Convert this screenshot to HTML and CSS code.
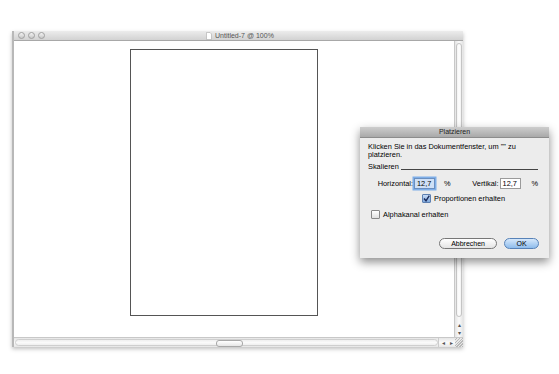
FILE: index.html
```html
<!DOCTYPE html>
<html lang="en">
<head>
    <meta charset="UTF-8">
    <title>Untitled-7 @ 100%</title>
    <link rel="stylesheet" href="styles.css">
</head>
<body>
    <div class="window">
        <div class="titlebar">
            <div class="lights">
                <span class="light"></span>
                <span class="light"></span>
                <span class="light"></span>
            </div>
            <div class="title">
                <svg class="doc-icon" width="6" height="8" viewBox="0 0 6 8">
                    <path d="M0.5 0.5 H4 L5.5 2 V7.5 H0.5 Z" fill="#fff" stroke="#aaa" stroke-width="0.6"/>
                </svg>
                Untitled-7 @ 100%
            </div>
        </div>
        <div class="main">
            <div class="canvas">
                <div class="page"></div>
            </div>
            <div class="vscroll">
                <div class="vthumb"></div>
                <div class="arrows-v">
                    <span>▴</span>
                    <span>▾</span>
                </div>
            </div>
        </div>
        <div class="hscroll">
            <div class="htrack">
                <div class="hthumb"></div>
            </div>
            <div class="arrows-h">
                <span>◂</span>
                <span>▸</span>
            </div>
            <div class="grip"></div>
        </div>
    </div>

    <div class="dialog">
        <div class="dialog-title">Platzieren</div>
        <div class="dialog-body">
            <p class="hint">Klicken Sie in das Dokumentfenster, um "" zu platzieren.</p>
            <div class="group-label">
                <span>Skalieren</span>
                <span class="rule"></span>
            </div>
            <div class="scale-row">
                <label class="field-label">Horizontal:</label>
                <span class="input focused">12,7</span>
                <span class="unit">%</span>
                <label class="field-label second">Vertikal:</label>
                <span class="input">12,7</span>
                <span class="unit last">%</span>
            </div>
            <div class="check-row centered">
                <span class="check checked">
                    <svg width="7" height="7" viewBox="0 0 7 7"><path d="M1 3.5 L3 5.8 L6.3 0.6" fill="none" stroke="#1a2a5a" stroke-width="1.4"/></svg>
                </span>
                Proportionen erhalten
            </div>
            <div class="check-row">
                <span class="check"></span>
                Alphakanal erhalten
            </div>
            <div class="buttons">
                <span class="btn">Abbrechen</span>
                <span class="btn primary">OK</span>
            </div>
        </div>
    </div>
</body>
</html>
```

FILE: styles.css
```css
body {
    margin: 0;
    width: 559px;
    height: 374px;
    background: #fff;
    font-family: "Liberation Sans", Arial, sans-serif;
    position: relative;
    overflow: hidden;
}

.window {
    position: absolute;
    left: 12px;
    top: 31px;
    width: 451px;
    height: 316px;
    display: flex;
    flex-direction: column;
    border-left: 2px solid #b8b8b8;
    box-sizing: border-box;
    box-shadow: 0 2px 4px rgba(0,0,0,0.25);
    background: #fff;
}

.titlebar {
    height: 9px;
    background: linear-gradient(#ececec, #d2d2d2);
    border-bottom: 1px solid #a8a8a8;
    position: relative;
    display: flex;
    align-items: center;
}

.lights {
    display: flex;
    gap: 3px;
    padding-left: 4px;
}

.light {
    width: 7px;
    height: 7px;
    border-radius: 50%;
    background: linear-gradient(#f4f4f4, #c8c8c8);
    border: 1px solid #a0a0a0;
    box-sizing: border-box;
}

.title {
    position: absolute;
    left: 192px;
    top: 0;
    height: 9px;
    display: flex;
    align-items: center;
    gap: 3px;
    font-size: 7px;
    color: #555;
}

.main {
    flex: 1;
    display: flex;
}

.canvas {
    flex: 1;
    padding: 8px 0 0 116px;
}

.page {
    width: 186px;
    height: 265px;
    border: 1px solid #555;
}

.vscroll {
    width: 8px;
    background: linear-gradient(90deg, #e4e4e4, #fafafa, #e4e4e4);
    border-left: 1px solid #c8c8c8;
    display: flex;
    flex-direction: column;
}

.vthumb {
    margin: 2px 1px 0;
    flex: 1;
    border: 1px solid #c4c4c4;
    border-radius: 3px;
    background: linear-gradient(90deg, #f2f2f2, #fff, #f2f2f2);
}

.arrows-v {
    height: 20px;
    display: flex;
    flex-direction: column;
    justify-content: space-around;
    align-items: center;
    font-size: 6px;
    line-height: 6px;
    color: #555;
    padding-top: 4px;
    box-sizing: border-box;
}

.hscroll {
    height: 9px;
    display: flex;
    border-top: 1px solid #c8c8c8;
    background: linear-gradient(#e6e6e6, #fafafa, #e6e6e6);
}

.htrack {
    flex: 1;
    margin: 1px 0 1px 1px;
    border: 1px solid #cfcfcf;
    border-radius: 4px;
    position: relative;
}

.hthumb {
    position: absolute;
    left: 200px;
    top: 0;
    width: 25px;
    height: 5px;
    border: 1px solid #a8a8a8;
    border-radius: 3px;
    background: linear-gradient(#fff, #e6e6e6);
}

.arrows-h {
    width: 16px;
    display: flex;
    justify-content: space-around;
    align-items: center;
    font-size: 6px;
    color: #555;
    border-left: 1px solid #ccc;
}

.grip {
    width: 8px;
    background: repeating-linear-gradient(135deg, #e8e8e8 0 1px, #b8b8b8 1px 2px);
}

.dialog {
    position: absolute;
    left: 360px;
    top: 127px;
    width: 189px;
    height: 131px;
    background: #ececec;
    box-shadow: 0 4px 9px rgba(0,0,0,0.45);
    display: flex;
    flex-direction: column;
    font-size: 7.4px;
    color: #000;
}

.dialog-title {
    height: 10px;
    line-height: 10px;
    text-align: center;
    font-size: 7px;
    color: #222;
    background: linear-gradient(#cdcdcd, #a9a9a9);
    border-bottom: 1px solid #8c8c8c;
}

.dialog-body {
    padding: 5px 8px 0 8px;
    display: flex;
    flex-direction: column;
}

.hint {
    margin: 0;
    line-height: 8px;
    width: 150px;
}

.group-label {
    display: flex;
    align-items: flex-end;
    gap: 2px;
    margin-top: 4px;
    line-height: 8px;
}

.rule {
    flex: 1;
    border-bottom: 1px solid #444;
    margin-bottom: 1px;
    margin-right: 3px;
}

.scale-row {
    display: flex;
    align-items: center;
    margin-top: 7px;
    height: 11px;
}

.field-label {
    width: 45px;
    text-align: right;
    padding-right: 1px;
}

.field-label.second {
    width: 48px;
}

.input {
    width: 17px;
    height: 9px;
    line-height: 9px;
    padding-left: 2px;
    background: #fff;
    border: 1px solid #9a9a9a;
}

.input.focused {
    box-shadow: 0 0 0 1.5px #7eaee8;
    border-color: #6a8fc0;
    background: #cfe0f6;
}

.unit {
    margin-left: 9px;
}

.unit.last {
    margin-left: 11px;
}

.check-row {
    display: flex;
    align-items: center;
    gap: 3px;
    height: 9px;
    padding-left: 3px;
}

.check-row.centered {
    margin-top: 5px;
    padding-left: 54px;
}

.check-row + .check-row {
    margin-top: 7px;
}

.check {
    width: 7px;
    height: 7px;
    border: 1px solid #888;
    border-radius: 1px;
    background: linear-gradient(#fff, #e0e0e0);
    display: flex;
    align-items: center;
    justify-content: center;
}

.check.checked {
    background: linear-gradient(#c8dcf6, #7fa8dc);
    border-color: #5d7fb0;
}

.buttons {
    display: flex;
    justify-content: flex-end;
    gap: 7px;
    margin-top: 19px;
    padding-right: 2px;
}

.btn {
    height: 9px;
    line-height: 9px;
    padding: 0 11px;
    border: 1px solid #777;
    border-radius: 6px;
    background: linear-gradient(#fff, #e4e4e4);
    font-size: 7px;
}

.btn.primary {
    padding: 0 11px;
    width: 11px;
    text-align: center;
    background: linear-gradient(#d6e8fb, #8ebcec);
    border-color: #5782b8;
}
```
